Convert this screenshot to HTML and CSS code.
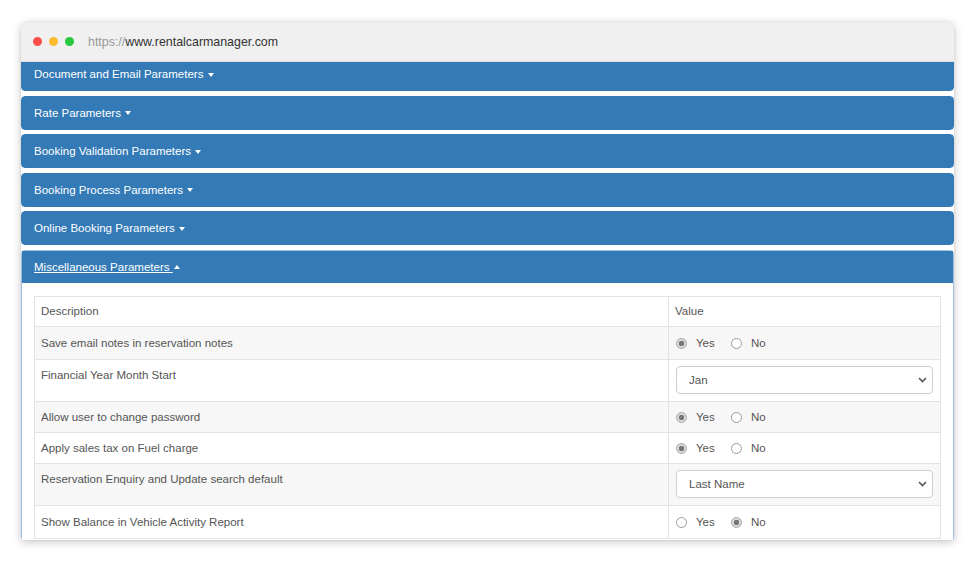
FILE: index.html
```html
<!DOCTYPE html>
<html lang="en">
<head>
  <meta charset="UTF-8">
  <title>Rental Car Manager - Parameters</title>
  <link rel="stylesheet" href="styles.css">
</head>
<body>
<div class="window">
  <div class="titlebar">
    <span class="dot red"></span>
    <span class="dot yellow"></span>
    <span class="dot green"></span>
    <span class="url"><span class="proto">https://</span>www.rentalcarmanager.com</span>
  </div>

  <div class="viewport">
    <div class="panels">
      <div class="panel">
        <div class="panel-heading">Document and Email Parameters <span class="caret"></span></div>
      </div>
      <div class="panel">
        <div class="panel-heading">Rate Parameters <span class="caret"></span></div>
      </div>
      <div class="panel">
        <div class="panel-heading">Booking Validation Parameters <span class="caret"></span></div>
      </div>
      <div class="panel">
        <div class="panel-heading">Booking Process Parameters <span class="caret"></span></div>
      </div>
      <div class="panel">
        <div class="panel-heading">Online Booking Parameters <span class="caret"></span></div>
      </div>
      <div class="panel open">
        <div class="panel-heading"><a href="#">Miscellaneous Parameters <span class="caret up"></span></a></div>
        <div class="panel-body">
          <table class="params">
            <tr class="head">
              <td>Description</td>
              <td class="value">Value</td>
            </tr>
            <tr class="stripe">
              <td>Save email notes in reservation notes</td>
              <td class="value">
                <label class="radio"><input type="radio" name="r1" checked>Yes</label>
                <label class="radio"><input type="radio" name="r1">No</label>
              </td>
            </tr>
            <tr class="tall">
              <td>Financial Year Month Start</td>
              <td class="value">
                <div class="select">
                  <select><option>Jan</option><option>Feb</option><option>Mar</option></select>
                  <svg class="chev" width="9" height="6" viewBox="0 0 9 6"><path d="M1 1l3.5 3.5L8 1" fill="none" stroke="#555" stroke-width="1.6"/></svg>
                </div>
              </td>
            </tr>
            <tr class="stripe short">
              <td>Allow user to change password</td>
              <td class="value">
                <label class="radio"><input type="radio" name="r2" checked>Yes</label>
                <label class="radio"><input type="radio" name="r2">No</label>
              </td>
            </tr>
            <tr class="short">
              <td>Apply sales tax on Fuel charge</td>
              <td class="value">
                <label class="radio"><input type="radio" name="r3" checked>Yes</label>
                <label class="radio"><input type="radio" name="r3">No</label>
              </td>
            </tr>
            <tr class="stripe tall">
              <td>Reservation Enquiry and Update search default</td>
              <td class="value">
                <div class="select">
                  <select><option>Last Name</option><option>First Name</option><option>Reservation No</option></select>
                  <svg class="chev" width="9" height="6" viewBox="0 0 9 6"><path d="M1 1l3.5 3.5L8 1" fill="none" stroke="#555" stroke-width="1.6"/></svg>
                </div>
              </td>
            </tr>
            <tr>
              <td>Show Balance in Vehicle Activity Report</td>
              <td class="value">
                <label class="radio"><input type="radio" name="r4">Yes</label>
                <label class="radio"><input type="radio" name="r4" checked>No</label>
              </td>
            </tr>
          </table>
        </div>
      </div>
    </div>
  </div>
</div>
</body>
</html>
```

FILE: styles.css
```css
* {
    box-sizing: border-box;
}

body {
    margin: 0;
    padding: 22px 21px;
    background: #fff;
    font-family: "Liberation Sans", Arial, sans-serif;
}

.window {
    width: 933px;
    height: 518px;
    border-radius: 7px 7px 3px 3px;
    overflow: hidden;
    background: #fff;
    box-shadow: 0 2px 10px rgba(0, 0, 0, 0.22), 0 0 2px rgba(0, 0, 0, 0.12);
    display: flex;
    flex-direction: column;
}

.titlebar {
    height: 40px;
    flex: none;
    background: #f0f0f0;
    border-bottom: 1px solid #dcdcdc;
    display: flex;
    align-items: center;
    padding-left: 12px;
    gap: 7px;
}

.dot {
    width: 9px;
    height: 9px;
    border-radius: 50%;
}
.red { background: #fc4f4b; }
.yellow { background: #fdbb2d; }
.green { background: #27c840; }

.url {
    margin-left: 7px;
    font-size: 12.4px;
    color: #333;
}
.proto {
    color: #9a9a9a;
}

.viewport {
    flex: 1;
    overflow: hidden;
}

.panels {
    margin-top: -5px;
}

.panel {
    margin-bottom: 4.5px;
    border: 1px solid #337ab7;
    border-radius: 4px;
    background: #fff;
}

.panel-heading {
    height: 32px;
    line-height: 32px;
    padding: 0 12px;
    background: #337ab7;
    color: #fff;
    font-size: 11.5px;
}

.panel-heading a {
    color: #fff;
    text-decoration: underline;
}

.caret {
    display: inline-block;
    width: 0;
    height: 0;
    vertical-align: middle;
    margin-left: 1px;
    border-top: 4px solid #fff;
    border-left: 3.5px solid transparent;
    border-right: 3.5px solid transparent;
}
.caret.up {
    border-top: none;
    border-bottom: 4px solid #fff;
}

.panel.open {
    border-color: #9fc1e4;
}

.panel-body {
    padding: 13px 12px 12px;
}

.params {
    width: 100%;
    border-collapse: collapse;
    border: 1px solid #e3e3e3;
    font-size: 11.5px;
    color: #555;
}

.params td {
    padding: 8px 6px;
    border-top: 1px solid #e3e3e3;
    line-height: 16px;
    vertical-align: middle;
}

.params tr.head td {
    padding: 6px 6px 7px;
}

.params tr.short td {
    padding-top: 7px;
    padding-bottom: 7px;
}

.params tr.tall td {
    vertical-align: top;
    padding: 6px 7px 7px;
}
.params tr.tall td:first-child {
    padding: 7px 6px;
}

.params .value {
    width: 272px;
    border-left: 1px solid #e3e3e3;
    padding-left: 7px;
}

.stripe {
    background: #f7f7f7;
}

.radio {
    display: inline-flex;
    align-items: center;
    height: 15px;
    margin-right: 13px;
    vertical-align: top;
    position: relative;
    top: 1px;
}

.radio input {
    appearance: none;
    margin: 0 9px 0 0;
    width: 11px;
    height: 11px;
    border: 1px solid #9a9a9a;
    border-radius: 50%;
    background: #fff;
}
.radio input:checked {
    background: radial-gradient(circle, #777 0 2.5px, #d8d8d8 3px);
    border-color: #aaa;
}

.select {
    position: relative;
}

.select select {
    appearance: none;
    width: 100%;
    height: 28px;
    padding: 0 12px;
    border: 1px solid #cfcfcf;
    border-radius: 4px;
    background: #fff;
    font-family: inherit;
    font-size: 11.5px;
    color: #555;
}

.chev {
    position: absolute;
    right: 6px;
    top: 11px;
    pointer-events: none;
}
```
